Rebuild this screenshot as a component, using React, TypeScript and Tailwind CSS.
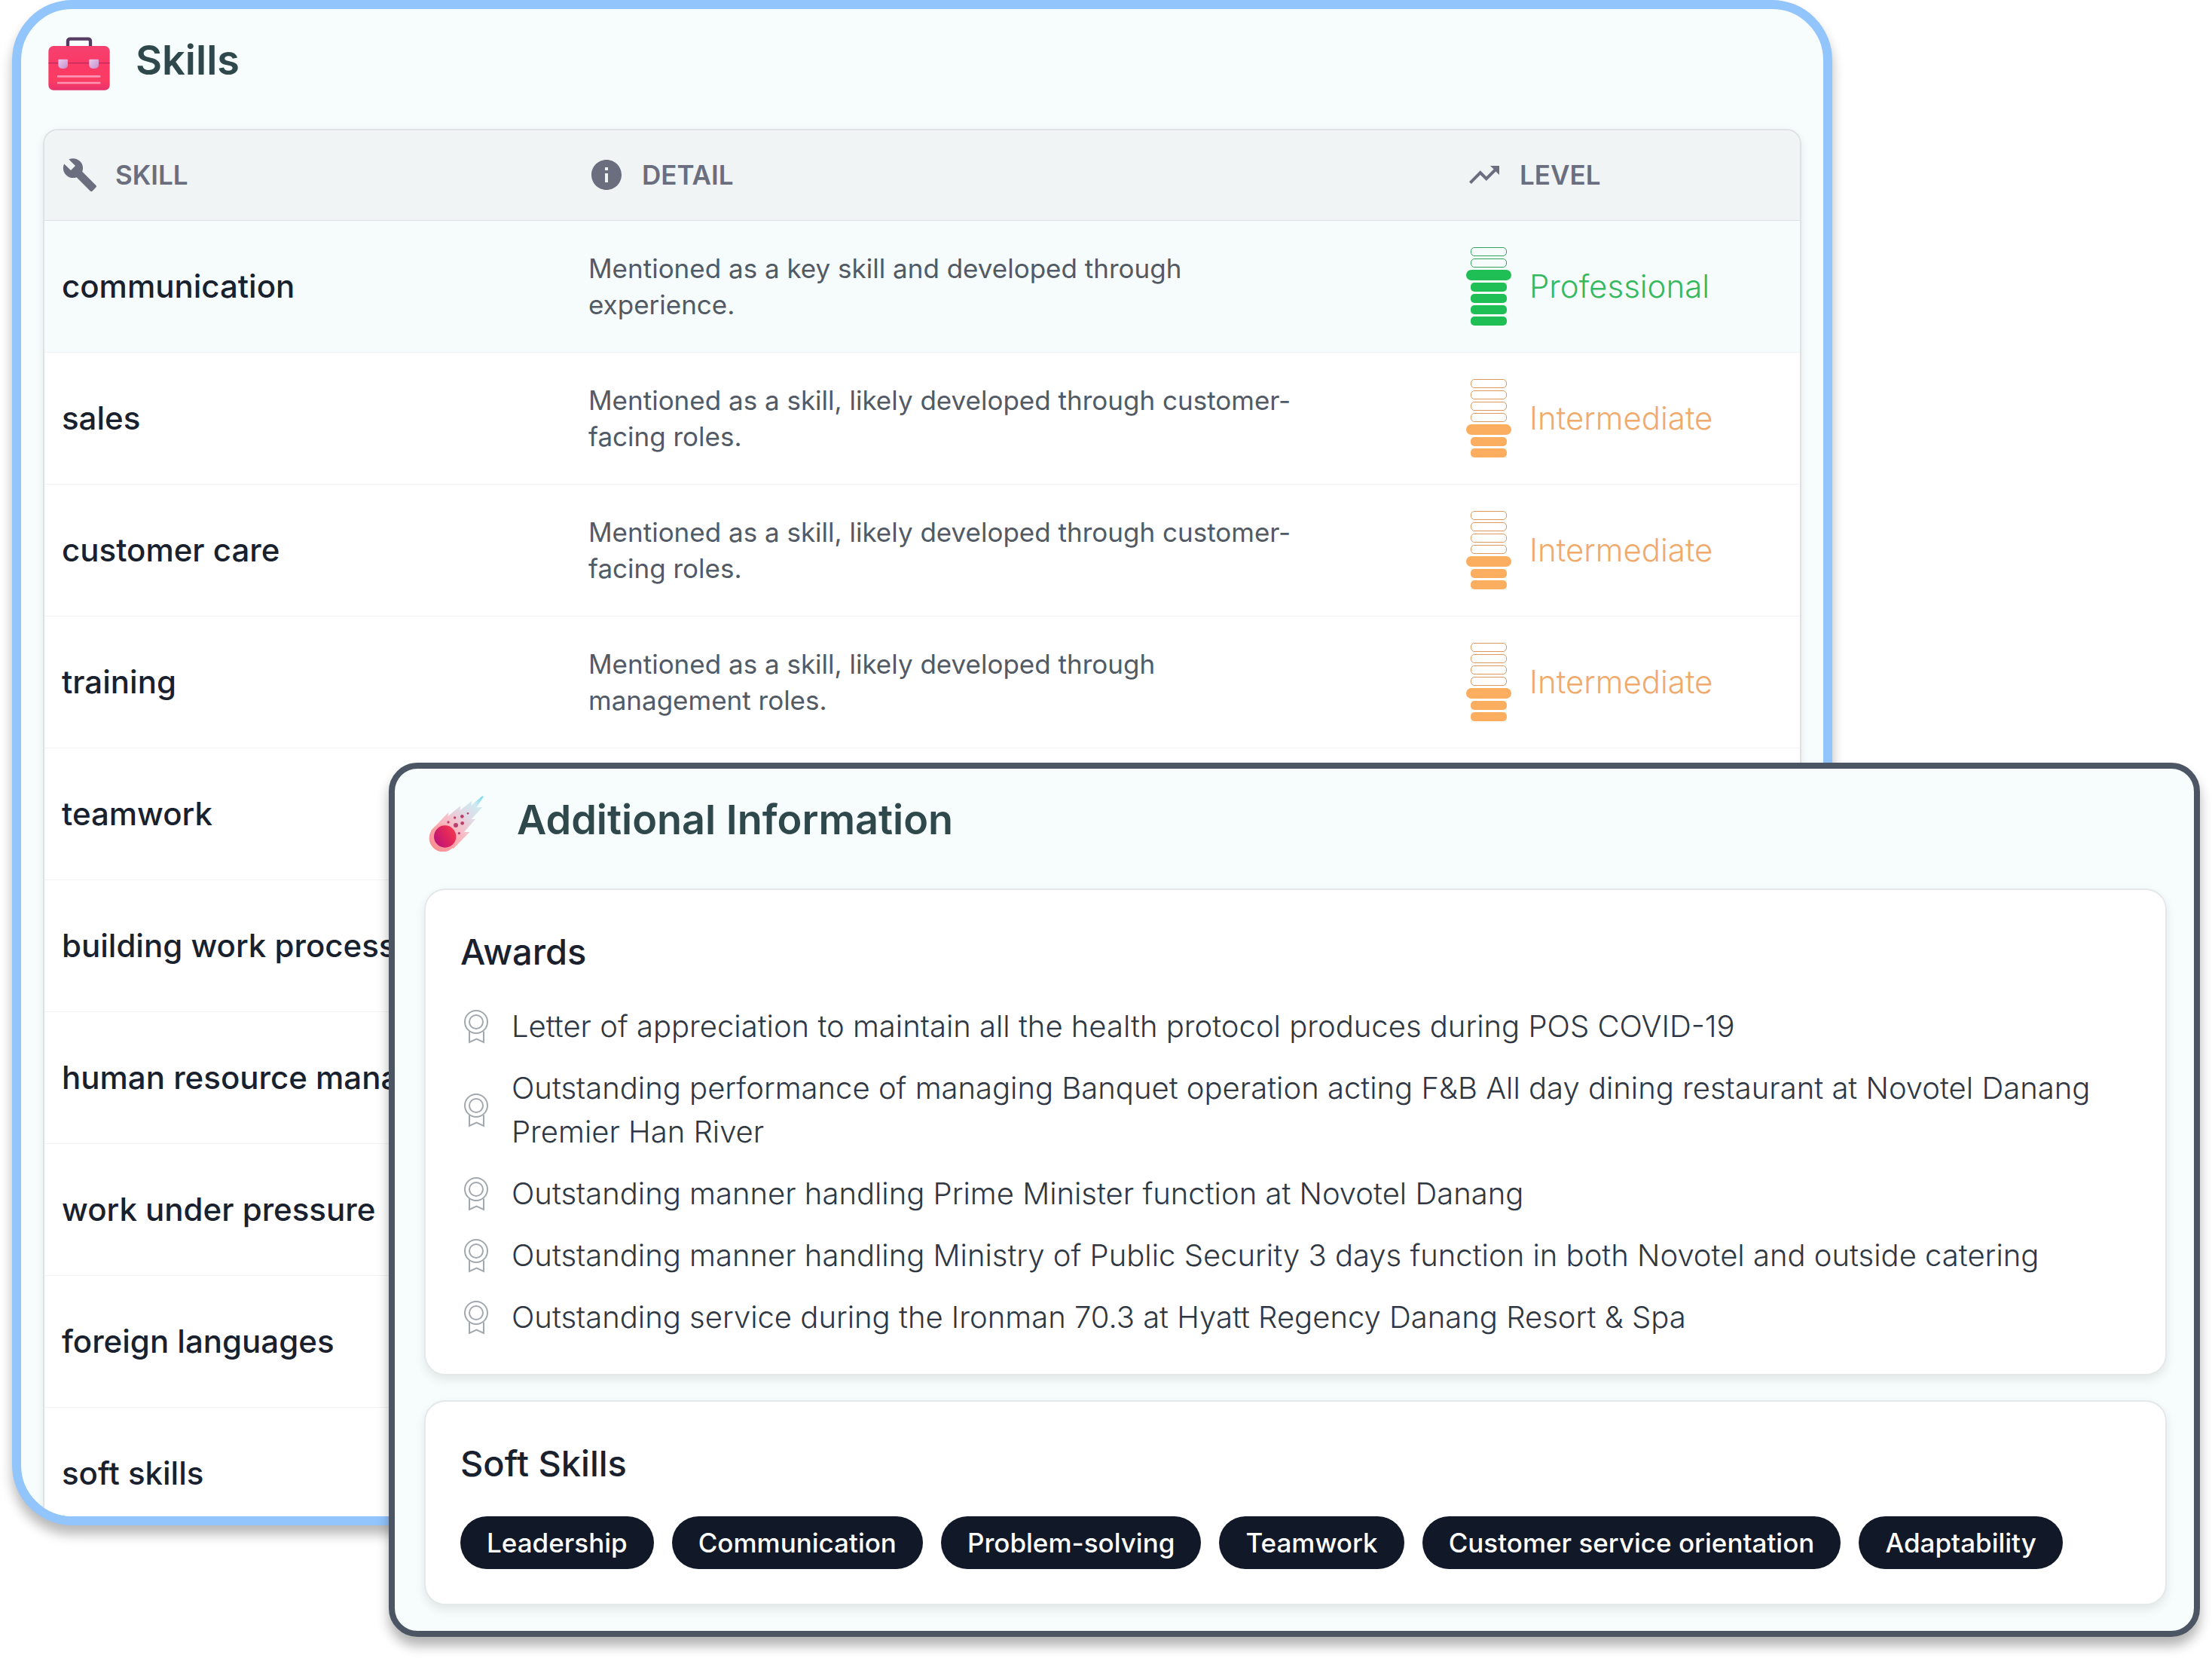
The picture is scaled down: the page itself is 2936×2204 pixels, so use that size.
import { ReactElement, ReactNode } from "react";
import { MdBuild, MdInfo, MdTrendingUp } from "react-icons/md";

type Level = "Professional" | "Intermediate";

interface SkillInterface {
  name: string;
  detail?: string;
  level?: Level;
}

const skills: SkillInterface[] = [
  { name: "communication", detail: "Mentioned as a key skill and developed through experience.", level: "Professional" },
  { name: "sales", detail: "Mentioned as a skill, likely developed through customer-facing roles.", level: "Intermediate" },
  { name: "customer care", detail: "Mentioned as a skill, likely developed through customer-facing roles.", level: "Intermediate" },
  { name: "training", detail: "Mentioned as a skill, likely developed through management roles.", level: "Intermediate" },
  { name: "teamwork" },
  { name: "building work processes" },
  { name: "human resource management" },
  { name: "work under pressure" },
  { name: "foreign languages" },
  { name: "soft skills" },
];

const awards: string[] = [
  "Letter of appreciation to maintain all the health protocol produces during POS COVID-19",
  "Outstanding performance of managing Banquet operation acting F&B All day dining restaurant at Novotel Danang Premier Han River",
  "Outstanding manner handling Prime Minister function at Novotel Danang",
  "Outstanding manner handling Ministry of Public Security 3 days function in both Novotel and outside catering",
  "Outstanding service during the Ironman 70.3 at Hyatt Regency Danang Resort & Spa",
];

const softSkills: string[] = ["Leadership", "Communication", "Problem-solving", "Teamwork", "Customer service orientation", "Adaptability"];

const columns: { icon: ReactElement; name: string; width: string }[] = [
  { name: "Skill", icon: <MdBuild size={48} />, width: "w-[30%]" },
  { name: "Detail", icon: <MdInfo size={48} />, width: "w-[50%]" },
  { name: "Level", icon: <MdTrendingUp size={48} />, width: "w-[20%]" },
];

// steps counts from the bottom, the top filled bar is the wide one
const levels: Record<Level, { steps: number; text: string; outline: string; fill: string }> = {
  Professional: { steps: 5, text: "text-[#35b95f]", outline: "border-[#33a25c]", fill: "bg-[#1fbf55]" },
  Intermediate: { steps: 3, text: "text-[#f0ab6c]", outline: "border-[#dc9a5c]", fill: "bg-[#fbae60]" },
};

function BriefcaseIcon() {
  return (
    <svg viewBox="39 21 252 252" className="size-[84px] shrink-0" aria-hidden="true">
      <defs>
        <linearGradient id="case" x1="0" y1="0" x2="0" y2="1">
          <stop offset="0" stopColor="#f5416f" />
          <stop offset="0.4" stopColor="#fb3a66" />
          <stop offset="0.8" stopColor="#fa3c62" />
          <stop offset="1" stopColor="#e5326e" />
        </linearGradient>
        <linearGradient id="clasp" x1="0" y1="0" x2="1" y2="1">
          <stop offset="0" stopColor="#eccbf0" />
          <stop offset="1" stopColor="#c48fc9" />
        </linearGradient>
      </defs>
      <path d="M120 94V72q0-10 10-10h70q10 0 10 10v22" fill="none" stroke="#553d63" strokeWidth="13" />
      <rect x="43" y="90" width="244" height="176" rx="20" fill="url(#case)" />
      <path d="M43 158h244" stroke="#b92a5c" strokeWidth="4" />
      <path d="M82 146q0-3 3-3h32q3 0 3 3v18q0 16-19 16t-19-16z" fill="url(#clasp)" />
      <path d="M205 146q0-3 3-3h32q3 0 3 3v18q0 16-19 16t-19-16z" fill="url(#clasp)" />
      <path d="M78 211h172M78 237h172" stroke="#ff93b4" strokeWidth="8" />
    </svg>
  );
}

function CometIcon() {
  return (
    <svg viewBox="27 15 252 252" className="size-[84px] shrink-0" aria-hidden="true">
      <defs>
        <linearGradient id="tail" x1="60" y1="250" x2="240" y2="50" gradientUnits="userSpaceOnUse">
          <stop offset="0" stopColor="#ff9a9a" />
          <stop offset="0.4" stopColor="#f7bcc6" />
          <stop offset="0.65" stopColor="#dfdbe6" />
          <stop offset="0.85" stopColor="#cfe9f0" />
          <stop offset="1" stopColor="#7fdde9" />
        </linearGradient>
        <linearGradient id="halo" x1="0" y1="1" x2="1" y2="0">
          <stop offset="0" stopColor="#f98a8c" />
          <stop offset="1" stopColor="#f9b4bd" />
        </linearGradient>
        <linearGradient id="core" x1="0" y1="0.8" x2="1" y2="0.2">
          <stop offset="0" stopColor="#b9127a" />
          <stop offset="0.6" stopColor="#e0265c" />
          <stop offset="1" stopColor="#f43a4f" />
        </linearGradient>
      </defs>
      <path
        d="M36 184 106 110l-2 16 50-41-2 18 47-38-3 18 44-37q6-2 4 5l-26 40h22l-43 47h16l-45 51h22l-64 66z"
        fill="url(#tail)"
      />
      <circle cx="84" cy="213" r="55" fill="url(#halo)" />
      <circle cx="92" cy="207" r="44" fill="url(#core)" />
      <g fill="#b8406f">
        <circle cx="105" cy="150" r="5" />
        <circle cx="131" cy="132" r="5" />
        <circle cx="160" cy="127" r="7" />
        <circle cx="183" cy="115" r="4" />
        <circle cx="135" cy="162" r="9" />
        <circle cx="161" cy="154" r="7" />
        <circle cx="148" cy="194" r="5" />
      </g>
    </svg>
  );
}

function AwardIcon() {
  return (
    <svg viewBox="0 0 42 48" className="h-12 w-[42px] shrink-0 text-[#a3a7ae]" fill="none" stroke="currentColor" strokeWidth="2" aria-hidden="true">
      <circle cx="21" cy="18" r="15" />
      <circle cx="21" cy="18" r="9" />
      <path d="M12 30.500V45l9.500-4.500L31 45V30.500" />
    </svg>
  );
}

function LevelBadge({ level }: { level: Level }) {
  const { steps, text, outline, fill } = levels[level];
  return (
    <div className="flex items-center gap-6">
      <div className="flex w-[60px] flex-col items-center gap-[3px]">
        {[7, 6, 5, 4, 3, 2, 1].map((step) => {
          if (step > steps) return <span key={step} className={`h-3 w-12 rounded-[5px] border ${outline}`} />;
          if (step === steps) return <span key={step} className={`h-[14px] w-[60px] rounded-full ${fill}`} />;
          return <span key={step} className={`h-3 w-12 rounded-[5px] ${fill}`} />;
        })}
      </div>
      <span className={`text-[42px] font-[350] ${text}`}>{level}</span>
    </div>
  );
}

function SectionTitle({ icon, children }: { icon: ReactElement; children: ReactNode }) {
  return (
    <header className="flex items-center gap-[33px] pt-[26px] pb-[49px] pl-1.5">
      {icon}
      <h2 className="text-[54px] leading-[72px] font-semibold text-[#2f484c]">{children}</h2>
    </header>
  );
}

function InfoCard({ title, children }: { title: string; children: ReactNode }) {
  return (
    <section className="rounded-[28px] border-2 border-[#e4e8e9] bg-white p-[46px] shadow-[0_6px_14px_rgba(0,0,0,0.09)]">
      <h3 className="mb-[34px] text-[47px] leading-[72px] font-medium text-[#18212d]">{title}</h3>
      {children}
    </section>
  );
}

function SkillsPanel() {
  return (
    <section className="col-start-1 row-start-1 mr-[504px] ml-4 h-[2024px] overflow-hidden rounded-[80px] border-[12px] border-[#93c5fd] bg-[#f6fdfc] px-[29px] shadow-[0_12px_16px_rgba(0,0,0,0.28)]">
      <SectionTitle icon={<BriefcaseIcon />}>Skills</SectionTitle>
      <div className="overflow-hidden rounded-[20px] border-2 border-[#dfe2e4] bg-white shadow-[0_4px_12px_rgba(0,0,0,0.08)]">
        <table className="w-full table-fixed text-left">
          <thead>
            <tr className="h-[119px] border-b border-[#dde1e3] bg-[#f0f4f5] text-[#6a6e7e]">
              {columns.map((column) => (
                <th key={column.name} scope="col" className={`${column.width} px-[23px]`}>
                  <div className="flex items-center gap-[23px]">
                    {column.icon}
                    <span className="text-[35px] font-semibold uppercase">{column.name}</span>
                  </div>
                </th>
              ))}
            </tr>
          </thead>
          <tbody>
            {skills.map((skill) => (
              <tr key={skill.name} className="h-[175px] border-b border-[#f1f3f5] first:bg-[#f6fcfc]">
                <td className="px-[23px] text-[42px] font-medium whitespace-nowrap text-[#18212d]">{skill.name}</td>
                <td className="px-[23px]">
                  <p className="max-w-[945px] text-[35px] leading-[48px] text-[#525a65]">{skill.detail}</p>
                </td>
                <td className="px-[23px]">{skill.level && <LevelBadge level={skill.level} />}</td>
              </tr>
            ))}
          </tbody>
        </table>
      </div>
    </section>
  );
}

function AdditionalInfoPanel() {
  return (
    <section className="z-10 col-start-1 row-start-1 mt-[1012px] mr-4 mb-8 ml-[516px] rounded-[38px] border-8 border-[#4b5563] bg-[#f6fdfc] pr-9 pb-[34px] pl-[39px] shadow-[0_12px_16px_rgba(0,0,0,0.3)]">
      <SectionTitle icon={<CometIcon />}>Additional Information</SectionTitle>
      <div className="flex flex-col gap-[33px]">
        <InfoCard title="Awards">
          <ul className="flex flex-col gap-6">
            {awards.map((award) => (
              <li key={award} className="flex items-center gap-[26px]">
                <AwardIcon />
                <p className="text-[40px] leading-[58px] font-[350] text-[#2f3743]">{award}</p>
              </li>
            ))}
          </ul>
        </InfoCard>
        <InfoCard title="Soft Skills">
          <ul className="flex flex-wrap gap-6">
            {softSkills.map((skill) => (
              <li key={skill} className="rounded-full bg-[#111827] px-[35px] text-[35px] leading-[70px] font-medium text-white">
                {skill}
              </li>
            ))}
          </ul>
        </InfoCard>
      </div>
    </section>
  );
}

export default function App() {
  return (
    <main className="grid grid-cols-1 items-start bg-white font-['Inter',sans-serif]">
      <SkillsPanel />
      <AdditionalInfoPanel />
    </main>
  );
}
